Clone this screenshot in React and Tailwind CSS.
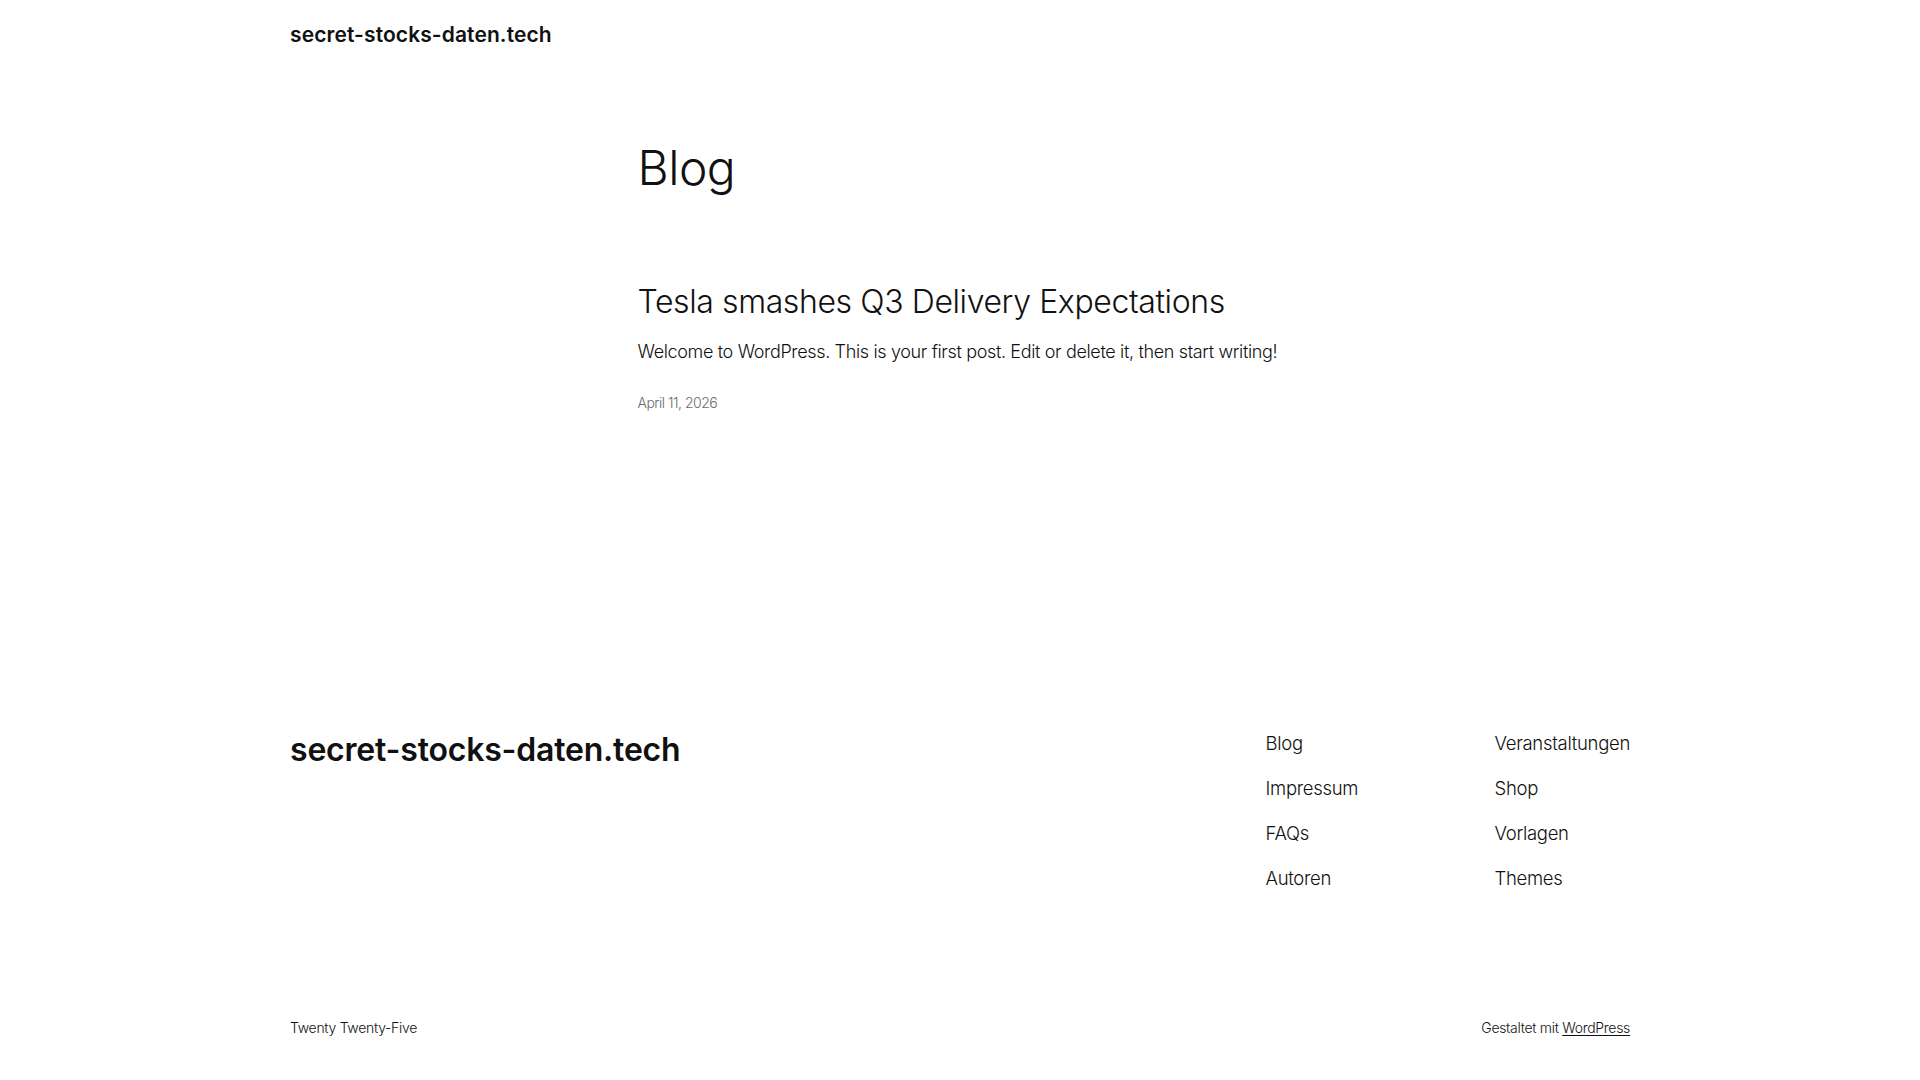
import React from "react";

const navLeft = ["Blog", "Impressum", "FAQs", "Autoren"];
const navRight = ["Veranstaltungen", "Shop", "Vorlagen", "Themes"];

export default function App() {
  return (
    <div className="min-h-screen bg-white text-[#111111] font-[Inter,'Noto_Sans',sans-serif] font-light">
      <header className="w-[1340px] mx-auto h-[70px] flex items-center">
        <a href="#" className="text-[21px] font-semibold tracking-[0.1px]">
          secret-stocks-daten.tech
        </a>
      </header>

      <main className="w-[645px] mx-auto pt-[69px]">
        <h1 className="text-[48px] leading-[1.2] font-light tracking-[-0.5px]">Blog</h1>

        <article className="mt-[86px]">
          <h2 className="text-[32px] leading-[1.2] font-light tracking-[-0.4px]">
            <a href="#">Tesla smashes Q3 Delivery Expectations</a>
          </h2>
          <p className="mt-[17px] text-[18px] leading-[1.6] tracking-[-0.35px]">
            Welcome to WordPress. This is your first post. Edit or delete it, then start writing!
          </p>
          <p className="mt-[25px] text-[14px] leading-[1.6] text-[#6b6b6b] tracking-[-0.5px]">
            April 11, 2026
          </p>
        </article>
      </main>

      <footer className="w-[1340px] mx-auto mt-[317px]">
        <div className="flex justify-between items-start">
          <a href="#" className="text-[32px] leading-[1.2] font-semibold tracking-[-0.2px]">
            secret-stocks-daten.tech
          </a>
          <div className="flex">
            <ul className="w-[229px] flex flex-col gap-[17.5px] -mt-[1.5px]">
              {navLeft.map((n) => (
                <li key={n} className="text-[18.5px] leading-[1.5] tracking-[-0.3px]">
                  <a href="#">{n}</a>
                </li>
              ))}
            </ul>
            <ul className="flex flex-col gap-[17.5px] -mt-[1.5px]">
              {navRight.map((n) => (
                <li key={n} className="text-[18.5px] leading-[1.5] tracking-[-0.3px]">
                  <a href="#">{n}</a>
                </li>
              ))}
            </ul>
          </div>
        </div>
        <div className="flex justify-between items-center mt-[124px] pb-[30px] text-[14px] leading-[1.5] tracking-[-0.3px]">
          <p>Twenty Twenty-Five</p>
          <p>
            Gestaltet mit{" "}
            <a href="#" className="underline underline-offset-2">
              WordPress
            </a>
          </p>
        </div>
      </footer>
    </div>
  );
}
